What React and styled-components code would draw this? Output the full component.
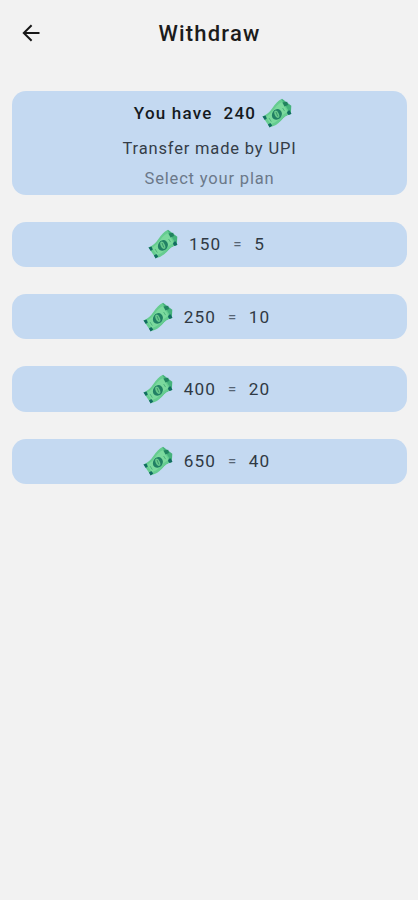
import React from "react";
import styled, { createGlobalStyle } from "styled-components";

const GlobalStyle = createGlobalStyle`
  * { box-sizing: border-box; }
  body { margin: 0; background: #f2f2f2; }
`;

const Screen = styled.main`
  min-height: 900px;
  padding: 0 11px 0 12px;
  background: #f2f2f2;
  color: #151a21;
  font-family: Roboto, sans-serif;
`;

const Header = styled.header`
  display: grid;
  grid-template-columns: 38px 1fr 38px;
  align-items: center;
  height: 66px;
  margin-bottom: 25px;
`;

const BackButton = styled.button`
  display: flex;
  justify-content: center;
  padding: 0;
  border: 0;
  background: none;
  color: #181818;
`;

const Title = styled.h1`
  margin: 0;
  padding-top: 1px;
  font-size: 22px;
  font-weight: 500;
  line-height: 26px;
  letter-spacing: 1.2px;
  text-align: center;
  color: #1c1c1c;
`;

const Summary = styled.section`
  display: flex;
  flex-direction: column;
  align-items: center;
  height: 104px;
  margin-bottom: 27px;
  padding-top: 5px;
  border-radius: 14px;
  background: #c4d9f1;
`;

const Balance = styled.div`
  display: flex;
  align-items: center;
  gap: 6px;
  height: 34px;
  padding-left: 7px;
  font-size: 17px;
  font-weight: 500;
  line-height: 20px;
  letter-spacing: 1.2px;
`;

const Count = styled.span`
  margin-left: 5px;
`;

const Line = styled.p`
  margin: 0;
  height: 30px;
  font-size: 16.5px;
  font-weight: 400;
  line-height: 38px;
  letter-spacing: 0.83px;
  color: ${(p) => (p.$muted ? "#6b7889" : "#343d48")};
`;

const Plans = styled.div`
  display: grid;
  gap: 27px;
`;

const Plan = styled.button`
  display: flex;
  align-items: center;
  justify-content: center;
  height: 45.2px;
  padding: 0 6px 0.3px 0;
  border: 0;
  border-radius: 14px;
  background: #c4d9f1;
  color: #303944;
  font: 400 17.2px Roboto, sans-serif;
  letter-spacing: 1.1px;
`;

const Amount = styled.span`
  margin-left: 11px;
`;

const Equals = styled.span`
  margin: 0 11.5px 0 12px;
  font-size: 15px;
  color: #566474;
`;

const BillIcon = styled.svg`
  display: block;
  flex: none;
  width: 30px;
  height: 30px;
`;

function Bill() {
  return (
    <BillIcon viewBox="0 0 30 30" aria-hidden="true">
      <path d="M15.5 4.8L20 .8 29.3 7.7 28.8 16.2Q23 17 18.5 23L12 26.5Z" fill="#45b27b" />
      <path d="M.5 18.5Q6.5 16.2 10.6 9.8T19.3 1.2L28.5 15.7Q23.5 17 19 22.5T7.7 29.2Z" fill="#66cc90" />
      <path d="M4 19Q9.6 15.7 12.5 10.8T19.8 4.2L25.6 13.8Q20.5 16.5 17.2 20.7T8.9 26.2Z" fill="#7bd99d" />
      <path d="M20.5 4.4l4.7-.6.8 3.3-3.5 1.4Z" fill="#21825f" />
      <path d="M25.9 12.7l1.6-.4 2 3.5-2.9 1.2-1.7-2ZM.5 18.4l3-1 1.3 3.2-2 1.5ZM5.9 26.5l2.4-1.6 2 2.7-2.7 1.8Z" fill="#126c61" />
      <ellipse cx="14.9" cy="16.4" rx="4.8" ry="5.5" transform="rotate(35 14.9 16.4)" fill="#218064" />
      <ellipse cx="14.8" cy="16.3" rx="2.1" ry="3.9" transform="rotate(-25 14.8 16.3)" fill="#69c98d" />
      <path d="M14 14l1.8 4.4" fill="none" stroke="#349269" strokeWidth="0.9" />
      <path d="M7 20l2.3 3.6M20.6 10l2 3.1" stroke="#4eb57d" strokeWidth="1" />
    </BillIcon>
  );
}

const plans = [
  { coins: 150, value: 5 },
  { coins: 250, value: 10 },
  { coins: 400, value: 20 },
  { coins: 650, value: 40 },
];

export default function App() {
  return (
    <>
      <GlobalStyle />
      <Screen>
        <Header>
          <BackButton aria-label="Back">
            <svg width="20" height="20" viewBox="0 0 20 20" fill="none" stroke="currentColor" strokeWidth="2">
              <path d="M18.5 10H3M10.6 2.2 2.8 10l7.8 7.8" />
            </svg>
          </BackButton>
          <Title>Withdraw</Title>
        </Header>
        <Summary>
          <Balance>
            <span>You have</span>
            <Count>240</Count>
            <Bill />
          </Balance>
          <Line>Transfer made by UPI</Line>
          <Line $muted>Select your plan</Line>
        </Summary>
        <Plans>
          {plans.map(({ coins, value }) => (
            <Plan key={coins}>
              <Bill />
              <Amount>{coins}</Amount>
              <Equals>=</Equals>
              <span>{value}</span>
            </Plan>
          ))}
        </Plans>
      </Screen>
    </>
  );
}
